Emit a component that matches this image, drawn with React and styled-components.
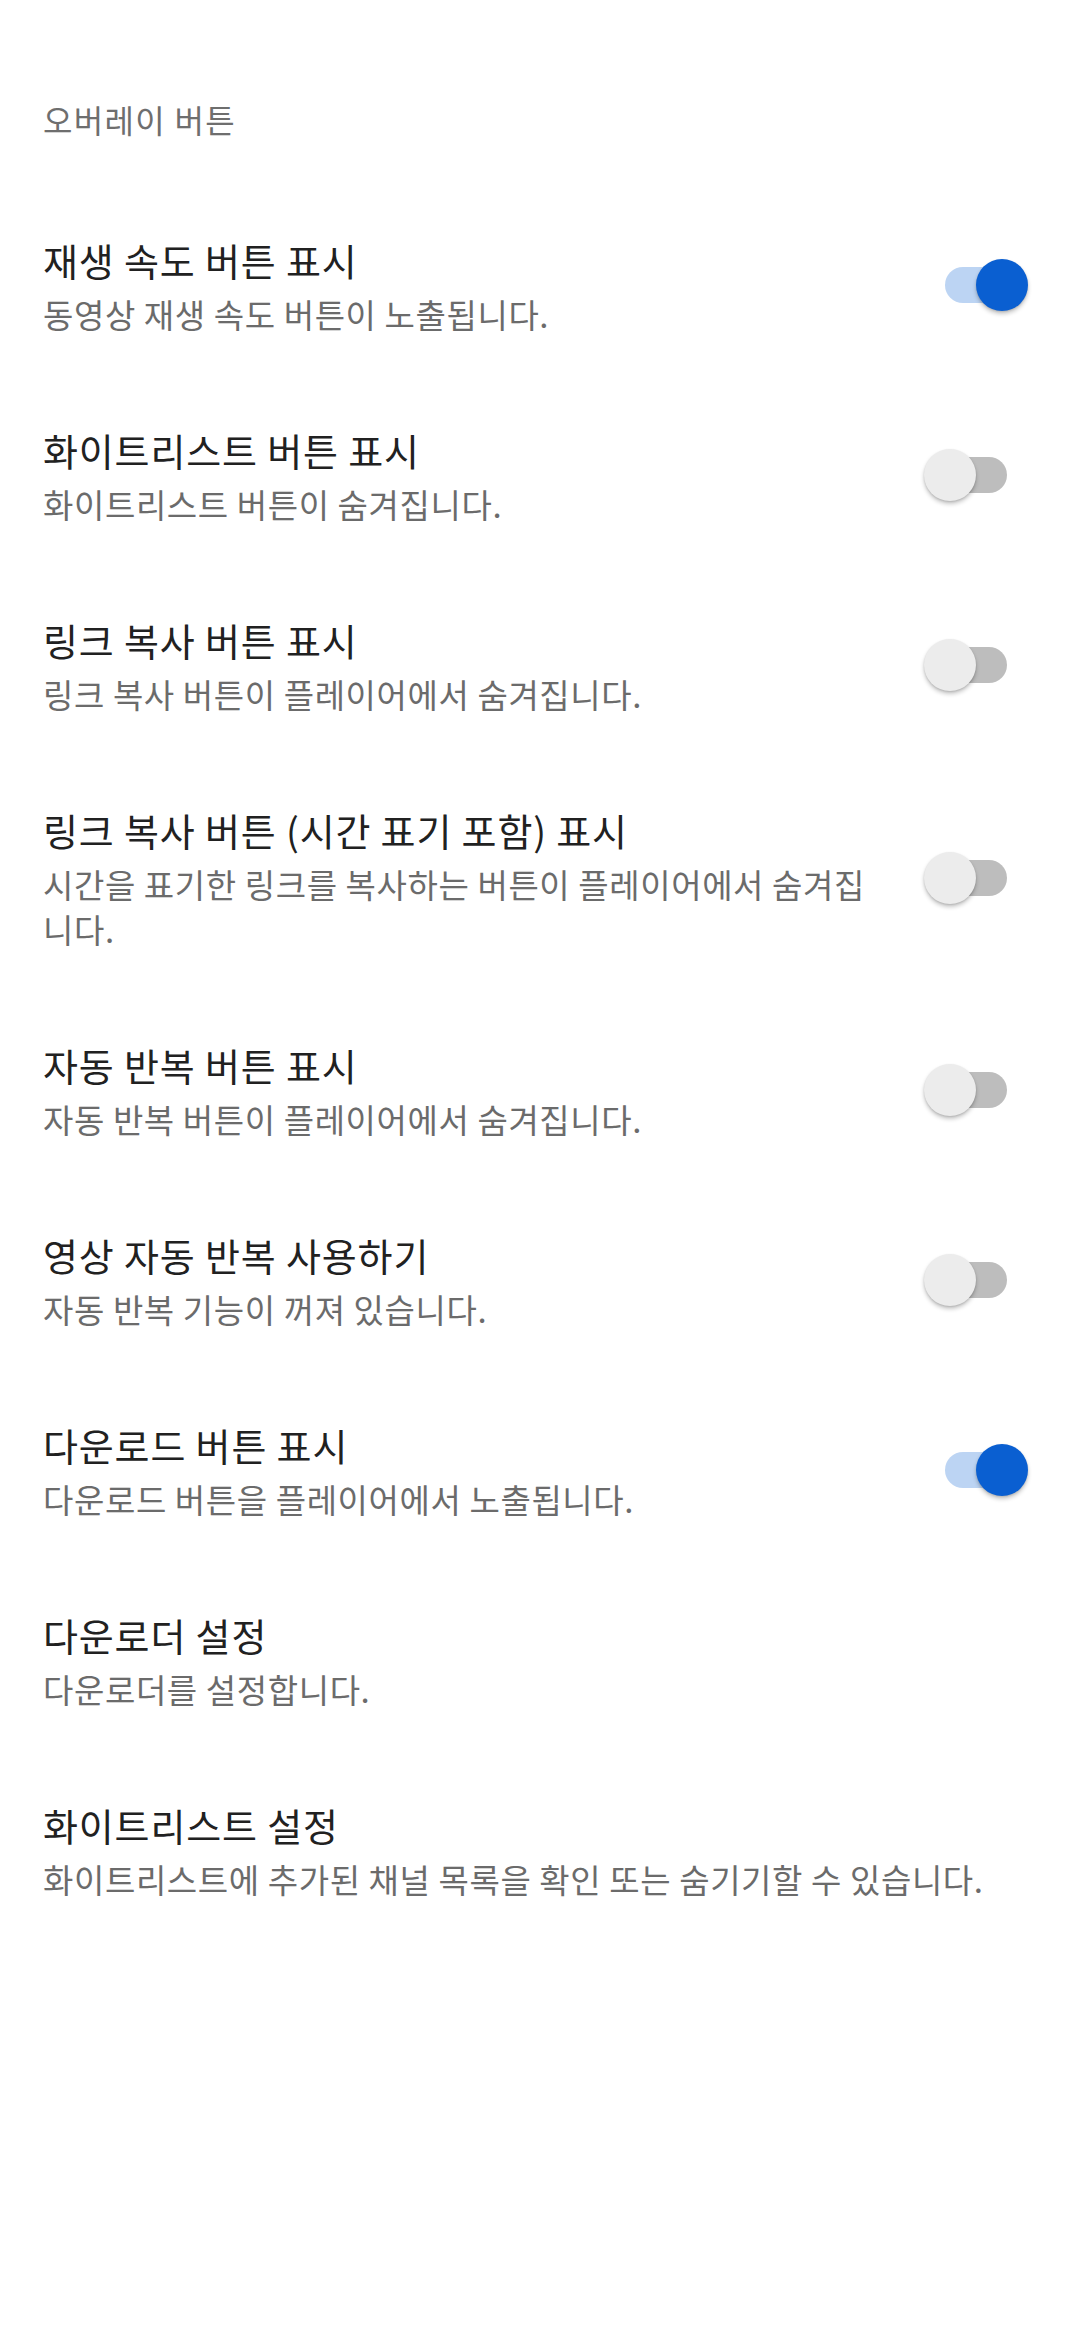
import React from "react";
import styled, { createGlobalStyle } from "styled-components";

const Global = createGlobalStyle`
  html, body { margin: 0; padding: 0; background: #ffffff; }
  body { font-family: "Noto Sans CJK KR", "Noto Sans", Roboto, sans-serif; }
  * { box-sizing: border-box; }
`;

const Page = styled.div`
  width: 1080px;
  min-height: 2327px;
  background: #ffffff;
  display: flex;
  flex-direction: column;
`;

const Category = styled.div`
  padding: 96px 43px 48px;
  font-size: 32px;
  line-height: 46px;
  letter-spacing: 1.3px;
  color: #6e6e6e;
`;

const Row = styled.div`
  min-height: 190px;
  padding: 43.5px 52px 43.5px 43px;
  display: flex;
  align-items: center;
  gap: 36px;
`;

const Texts = styled.div`
  flex: 1;
  min-width: 0;
  display: flex;
  flex-direction: column;
`;

const Title = styled.div`
  font-size: 38px;
  line-height: 52px;
  letter-spacing: 0.85px;
  color: #212121;
`;

const Summary = styled.div`
  margin-top: 6px;
  font-size: 33px;
  line-height: 45px;
  letter-spacing: 0.6px;
  color: #6b6b6b;
`;

const SwitchBox = styled.div`
  position: relative;
  width: 104px;
  height: 52px;
  flex: none;
`;

const Track = styled.div`
  position: absolute;
  left: 21px;
  top: 8px;
  width: 62px;
  height: 36px;
  border-radius: 18px;
  background: ${(p) => (p.$on ? "#bcd4f3" : "#bdbdbd")};
`;

const Thumb = styled.div`
  position: absolute;
  top: 0;
  left: ${(p) => (p.$on ? "52px" : "0")};
  width: 52px;
  height: 52px;
  border-radius: 50%;
  background: ${(p) => (p.$on ? "#0a5fd1" : "#ececec")};
  box-shadow: 0 3px 4px rgba(0, 0, 0, 0.22), 0 1px 2px rgba(0, 0, 0, 0.12);
`;

const Switch = ({ on }) => (
  <SwitchBox>
    <Track $on={on} />
    <Thumb $on={on} />
  </SwitchBox>
);

const items = [
  { t: "재생 속도 버튼 표시", s: "동영상 재생 속도 버튼이 노출됩니다.", sw: true },
  { t: "화이트리스트 버튼 표시", s: "화이트리스트 버튼이 숨겨집니다.", sw: false },
  { t: "링크 복사 버튼 표시", s: "링크 복사 버튼이 플레이어에서 숨겨집니다.", sw: false },
  {
    t: "링크 복사 버튼 (시간 표기 포함) 표시",
    s: "시간을 표기한 링크를 복사하는 버튼이 플레이어에서 숨겨집니다.",
    sw: false,
  },
  { t: "자동 반복 버튼 표시", s: "자동 반복 버튼이 플레이어에서 숨겨집니다.", sw: false },
  { t: "영상 자동 반복 사용하기", s: "자동 반복 기능이 꺼져 있습니다.", sw: false },
  { t: "다운로드 버튼 표시", s: "다운로드 버튼을 플레이어에서 노출됩니다.", sw: true },
  { t: "다운로더 설정", s: "다운로더를 설정합니다." },
  { t: "화이트리스트 설정", s: "화이트리스트에 추가된 채널 목록을 확인 또는 숨기기할 수 있습니다." },
];

export default function App() {
  return (
    <>
      <Global />
      <Page>
        <Category>오버레이 버튼</Category>
        {items.map((it, i) => (
          <Row key={i}>
            <Texts>
              <Title>{it.t}</Title>
              <Summary>{it.s}</Summary>
            </Texts>
            {it.sw !== undefined && <Switch on={it.sw} />}
          </Row>
        ))}
      </Page>
    </>
  );
}
